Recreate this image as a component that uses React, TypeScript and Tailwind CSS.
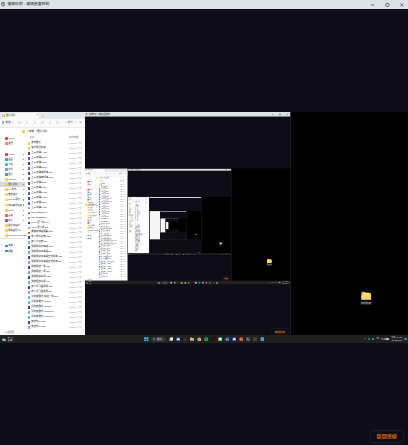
import type { ReactNode } from 'react';

const JPG = 'bg-[#5a6fae]';
const PSD = 'bg-[#54409a]';
const BLU = 'bg-[#6fb4d8]';
const FOL = 'bg-[#f8cf55]';

const files: [string, string][] = [
  ['參考圖片', FOL],
  ['備份用資料夾', FOL],
  ['上20字牌A.jpg', PSD],
  ['上20字牌B.jpg', JPG],
  ['上20字牌C.jpg', PSD],
  ['上20字牌D.jpg', JPG],
  ['上20字牌新版本.jpg', PSD],
  ['上20字牌新版本.png', JPG],
  ['上20字牌E.jpg', PSD],
  ['上20字牌F.jpg', PSD],
  ['上20字牌G.jpg', JPG],
  ['上20字牌H.jpg', PSD],
  ['上20字牌J.jpg', JPG],
  ['上20字牌K.jpg', BLU],
  ['RS_20230507', 'bg-[#b06a78]'],
  ['RS_20230507', 'bg-[#c9a0a0]'],
  ['cover第一版.psd', PSD],
  ['cover第二版.jpg', BLU],
  ['網路排程與規劃.pptx', 'bg-[#e2603a]'],
  ['新人員工名冊.psd', PSD],
  ['新人工名冊.jpg', BLU],
  ['測試用宣傳海報.psd', PSD],
  ['測試用宣傳海報.jpg', BLU],
  ['測試用宣傳海報直式版本.psd', PSD],
  ['測試用宣傳海報直式版本.jpg', BLU],
  ['測試標籤一版.psd', PSD],
  ['測試標籤一版.jpg', BLU],
  ['測試標籤三版.psd', PSD],
  ['測試標籤三版.jpg', BLU],
  ['達人公司業務用.psd', PSD],
  ['達人公司業務用.jpg', BLU],
  ['資料夾圖示-白色一版.jpg', BLU],
  ['資料夾圖示-02.jpg', BLU],
  ['資料夾圖示-02.psd', PSD],
  ['資料夾圖示-0103.jpg', BLU],
  ['資料夾圖示-0103.jpg', BLU],
  ['新文件04.psd', PSD],
  ['新文件04.jpg', BLU],
];

const quick: [string, string][] = [
  ['Image', 'bg-[#e8434a]'],
  ['桌面', 'bg-[#2fa0dc]'],
  ['下載', 'bg-[#35c5b5]'],
  ['文件', 'bg-[#8298b0]'],
  ['圖片', 'bg-[#3a95e0]'],
  ['Images', FOL],
  ['圖片資料', FOL],
  ['01-素材', FOL],
  ['廣告設計', FOL],
  ['puGoo素材', FOL],
  ['新專案資料夾', FOL],
  ['game', FOL],
  ['音樂', 'bg-[#e06070]'],
  ['影片', 'bg-[#8b4fd0]'],
  ['設計稿備份', FOL],
  ['網站設計(二)', FOL],
  ['Telegram Desktop', FOL],
];

function SideRow({ label, color, pin, active, arrow }: { label: string; color: string; pin?: boolean; active?: boolean; arrow?: boolean }) {
  return (
    <div className={`flex h-[5.1px] shrink-0 items-center pl-[1px] ${active ? 'bg-[#d9d9d9]' : ''}`}>
      <span className="w-[3.5px] shrink-0 text-[3px] leading-[5px] text-[#777]">{arrow ? '›' : ''}</span>
      <i className={`h-[2.8px] w-[3px] shrink-0 rounded-[0.4px] ${color}`} />
      <span className="ml-[0.8px] flex-1 whitespace-nowrap text-[2.3px] leading-[5px] text-[#333]">{label}</span>
      {pin && <span className="mr-[1px] h-[1.2px] w-[1.4px] bg-[#999]" />}
    </div>
  );
}

function Explorer() {
  return (
    <div className="flex h-[223px] w-[85px] flex-col overflow-hidden bg-white text-[#333]">
      <div className="flex h-[6.5px] shrink-0 items-end bg-[#e5e8eb] pl-px">
        <div className="flex h-[6px] w-[38px] items-center rounded-t-[1.5px] bg-[#fafafa] px-[1px]">
          <i className={`h-[2.4px] w-[3px] ${FOL}`} />
          <span className="ml-[1px] flex-1 text-[2.3px] leading-[5px]">圖片資料</span>
          <span className="text-[3px] leading-[5px] text-[#777]">×</span>
        </div>
        <span className="ml-[2.5px] text-[3.4px] leading-[6px] text-[#777]">+</span>
      </div>
      <div className="flex h-[9px] shrink-0 items-center border-b-[0.5px] border-[#ececec] bg-[#fafafa] pl-[2px] text-[2.6px] leading-[5px] whitespace-nowrap">
        <i className="mr-[1px] size-[2.4px] rounded-full bg-[#8aaac5]" />
        <span className="w-[13px]">新增 ⌄</span>
        <div className="flex w-[46px] gap-[5.2px]">
          {[0, 1, 2, 3, 4, 5].map((n) => (
            <i key={n} className="size-[2.4px] rounded-[0.6px] bg-[#dfe8ee]" />
          ))}
        </div>
        <span className="text-[#666]"><span className="text-[#3a87c4]">↑↓</span> 排序 ⌄</span>
        <span className="ml-[3px]">≡</span>
      </div>
      <div className="flex h-[7.5px] shrink-0 items-center pl-[1px] text-[3px] leading-[5px] whitespace-nowrap">
        <span className="flex w-[21px] gap-[2.5px] text-[#777]"><span>←</span><span>→</span><span>↑</span></span>
        <i className={`h-[2.8px] w-[3.2px] ${FOL}`} />
        <span className="ml-[2px] text-[2.6px]">› 本機 &nbsp;› 圖片資料</span>
      </div>
      <div className="flex h-[195.5px] min-h-0 shrink-0">
        <div className="flex w-[25px] shrink-0 flex-col pt-[1px]">
          <SideRow label="Image" color="bg-[#e8434a]" arrow />
          <SideRow label="首頁" color="bg-[#db9174]" />
          <div className="h-[5.4px] shrink-0" />
          {quick.map(([label, color], n) => (
            <SideRow key={label} label={label} color={color} pin={n < 14} active={n === 6} />
          ))}
          <div className="h-[5.2px] shrink-0 border-t-[0.4px] border-[#e5e5e5]" />
          <SideRow label="本機" color="bg-[#2388c8]" arrow />
          <SideRow label="網路" color="bg-[#3483b8]" arrow />
        </div>
        <div className="flex-1 pl-[2.5px]">
          <div className="flex h-[6px] items-center text-[2.4px] leading-[4px] text-[#777]">
            <span className="w-[41.5px] pl-[2px]">名稱</span>
            <span className="whitespace-nowrap">修改日期</span>
          </div>
          {files.map(([name, color], n) => (
            <div key={n} className="flex h-[4.97px] items-center whitespace-nowrap text-[2.4px] leading-[4.9px]">
              <i className={`mr-[1px] h-[2.8px] w-[2.8px] shrink-0 ${color}`} />
              <span className="w-[38px] shrink-0 text-[#222]">{name}</span>
              <span className="text-[2px] text-[#999]">2023/5/7 下午</span>
            </div>
          ))}
        </div>
      </div>
      <div className="flex-1 bg-[#fafafa] pl-[4px] text-[2.4px] leading-[4px] text-[#666]">41 個項目</div>
    </div>
  );
}

function App24({ children }: { children: ReactNode }) {
  return <svg viewBox="0 0 24 24" className="size-[4.6px] shrink-0">{children}</svg>;
}

function Taskbar({ plain }: { plain: boolean }) {
  return (
    <div className="relative flex h-[8px] items-center bg-[#202121] text-[2.5px] text-[#ddd]">
      <div className="flex w-[144px] items-center pl-[2px]">
        <svg viewBox="0 0 24 16" className="h-[3px] w-[4.4px]">
          <circle cx="8" cy="7" r="6" fill="#7ca8da" />
          <rect x="2" y="6" width="20" height="9" rx="4.5" fill="#bfd5ef" />
        </svg>
        {!plain && <span className="ml-[1px] leading-[3px]">25°C<br />多雲</span>}
      </div>
      <div className="flex items-center gap-[2.42px]">
        <App24><path fill="#42bdf2" d="M1 1h10v10H1zM13 1h10v10H13zM1 13h10v10H1zM13 13h10v10H13z" /></App24>
        <div className="flex h-[5px] w-[15.2px] items-center rounded-full bg-[#343535] pl-[2px] leading-[5px]">
          <svg viewBox="0 0 24 24" className="mr-[1.5px] size-[2.5px]" fill="none" stroke="#ddd" strokeWidth="3"><circle cx="10" cy="10" r="7" /><path d="m15 15 7 7" /></svg>
          {plain ? null : '搜尋'}
        </div>
        <App24><rect x="1" y="5" width="15" height="16" fill="#888" /><rect x="7" y="2" width="16" height="16" fill="#e8e8e8" /></App24>
        <App24><circle cx="12" cy="12" r="11" fill="#6264c7" /><rect x="5" y="8" width="14" height="8" rx="3" fill="#fff" /></App24>
        <App24><path d="m2 20 9-14 3 7 8-6-9 13z" fill="#a51d28" /></App24>
        <App24><path d="M1 3h8l3 4h11v14H1z" fill="#f8ce48" /><path d="M4 14h16v8H4z" fill="#4693d1" /></App24>
        <App24><circle cx="12" cy="12" r="11" fill="#e94a3f" /><path d="M12 12 2 7a11 11 0 0 0 9 16z" fill="#3ba55c" /><path d="m12 12 10-4a11 11 0 0 1-11 15z" fill="#f4c532" /><circle cx="12" cy="12" r="5" fill="#fff" /><circle cx="12" cy="12" r="3.8" fill="#4285f4" /></App24>
        <App24><circle cx="12" cy="12" r="11" fill="#1db954" /><path d="M5 9q8-3 14 1M6 14q7-2 11 1" fill="none" stroke="#153d22" strokeWidth="2.5" /></App24>
        <App24><rect x="1" y="1" width="22" height="22" rx="2" fill="#290307" /><path d="M8 4h3l5 16h-3z" fill="#b81420" /></App24>
        <App24><rect x="1" y="1" width="22" height="22" rx="7" fill="#31cf4c" /><ellipse cx="12" cy="11" rx="8" ry="6" fill="#fff" /></App24>
        <App24><path d="M6 2h17v20H6z" fill="#2b7cd3" /><path d="M1 7h13v11H1z" fill="#185abd" /><path d="m4 10 2 6 2-5 2 5 2-6" fill="none" stroke="#fff" strokeWidth="1.6" /></App24>
        <App24><circle cx="12" cy="12" r="11" fill="#5865e8" /><rect x="5" y="7" width="14" height="9" rx="4" fill="#e9eaff" /></App24>
        <App24><circle cx="13" cy="12" r="11" fill="#e3603b" /><rect x="1" y="7" width="12" height="12" fill="#b8381c" /><path d="M6 17v-8h4v4H6" fill="none" stroke="#fff" strokeWidth="1.5" /></App24>
        <App24><rect x="2" y="3" width="20" height="18" fill="#484848" stroke="#888" /><path d="m5 7 5 4-5 4M12 16h7" fill="none" stroke="#eee" strokeWidth="2" /></App24>
        <App24><circle cx="12" cy="12" r="10" fill="#303235" stroke="#777" strokeWidth="2" /><path d="M7 12h10" stroke="#888" strokeWidth="2" /></App24>
        <App24><rect x="4" y="1" width="16" height="22" rx="2" fill="#57bce5" /><path d="M7 7h10M7 12h10M7 17h10" stroke="#236887" strokeWidth="2" /></App24>
      </div>
      {!plain && (
        <div className="ml-auto flex items-center gap-[2px] pr-[1px] leading-[4px]">
          <svg viewBox="0 0 12 8" className="h-[1.6px] w-[2.4px]" fill="none" stroke="#ccc" strokeWidth="2"><path d="m1 7 5-5 5 5" /></svg>
          <i className="size-[2px] rounded-full bg-[#2681bd]" />
          <i className="h-[2.5px] w-[1.5px] rounded-full border-[0.4px] border-[#aaa]" />
          <span>中</span>
          <svg viewBox="0 0 44 16" className="h-[2.8px] w-[8px]" fill="none" stroke="#ddd" strokeWidth="3"><path d="M1 6q6-6 12 0M4 10q3-3 6 0M17 5h4l5-4v14l-5-4h-4z" /><rect x="31" y="3" width="11" height="10" fill="#ddd" /></svg>
          <span className="text-right text-[2.4px] leading-[3px]">下午 04:55<br />2023/5/17</span>
          <i className="size-[2.6px] rounded-full bg-[#2196e8]" />
        </div>
      )}
    </div>
  );
}

function Desktop({ depth }: { depth: number }) {
  const plain = depth <= 2;
  return (
    <div className="relative h-[231px] w-[408px] overflow-hidden bg-black">
      <div className="flex h-[223px]">
        {plain ? <div className="h-[223px] w-[85px] bg-[#f5f5f5]" /> : <Explorer />}
      </div>
      <div className="absolute top-[179px] left-[356px] flex w-[20px] flex-col items-center">
        <svg viewBox="0 0 30 26" className="h-[9px] w-[10.4px]">
          <path d="M1 2h10l3 4h15v18H1z" fill="#dba52e" />
          <path d="M7 5h17v10H7z" fill="#fff5d5" />
          <path d="M1 11h9l4-3h15v17H1z" fill="#fbd768" />
        </svg>
        {!plain && <span className="mt-[0.5px] text-[2.1px] leading-[4px] whitespace-nowrap text-white">新增資料夾</span>}
      </div>
      {depth > 0 && (
        <div className="absolute top-0 left-[85px] origin-top-left scale-[0.5035] bg-[#292a2d] pr-[1px]">
          <RemoteWindow depth={depth - 1} />
        </div>
      )}
      <div className="absolute inset-x-0 bottom-0">
        <Taskbar plain={plain} />
      </div>
    </div>
  );
}

function RemoteWindow({ depth }: { depth: number }) {
  const plain = depth <= 2;
  return (
    <div className="flex h-[445px] w-[408px] flex-col overflow-hidden bg-[#0e0d17]">
      <div className="flex h-[9px] shrink-0 items-center bg-[#dee2e7] pl-[1px] text-[#222]">
        <svg viewBox="0 0 24 24" className="mr-[2px] size-[4.4px]">
          <circle cx="12" cy="12" r="9.5" fill="#fff" stroke="#333" strokeWidth="3.5" />
          <path d="m4 4 10 6-3 5 8 5M13 2l-1 8" fill="none" stroke="#333" strokeWidth="3" />
        </svg>
        {!plain && <span className="text-[3.85px] leading-[7px]">遠端存取 - 遠端桌面控制</span>}
        <svg viewBox="0 0 36 8" className="mr-[3px] ml-auto h-[8px] w-[36px]" fill="none" stroke="#444" strokeWidth="0.7">
          <path d="M2 4h3.4M31.2 2.3l3.2 3.2m0-3.2-3.2 3.2" />
          <rect x="16.8" y="2.4" width="3.2" height="3" rx="0.6" />
        </svg>
      </div>
      <div className="h-[103px] shrink-0" />
      <Desktop depth={depth} />
      <div className="flex flex-1 items-end justify-end pr-[4.5px] pb-[2.5px]">
        <div className="flex h-[13px] w-[33.5px] items-center justify-center rounded-[2px] border border-[#1d1c26] text-[5px] leading-[8px] font-medium text-[#e27412]">
          {plain ? <i className="h-[4px] w-[20px] bg-[#8a4a12]" /> : '斷開連線'}
        </div>
      </div>
    </div>
  );
}

export default function App() {
  return (
    <div className="h-[445px] w-[408px] overflow-hidden font-['Liberation_Sans','Noto_Sans_CJK_TC',sans-serif]">
      <RemoteWindow depth={5} />
    </div>
  );
}
